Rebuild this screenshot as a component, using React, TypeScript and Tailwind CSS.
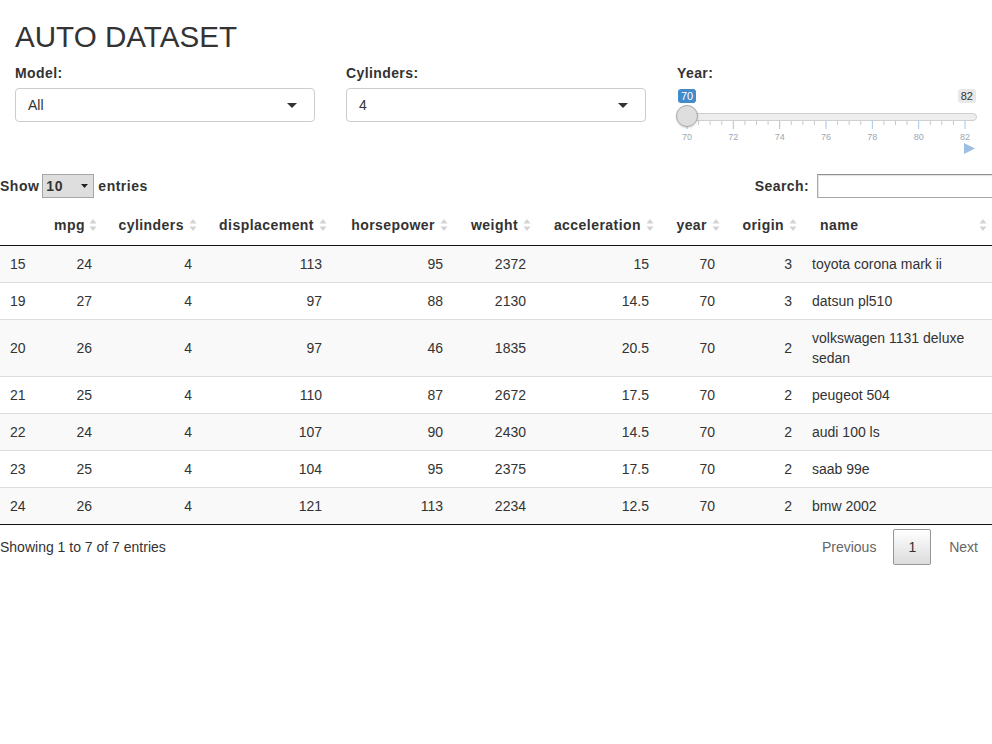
import React from 'react';

type Car = {
  id: number;
  mpg: number;
  cylinders: number;
  displacement: number;
  horsepower: number;
  weight: number;
  acceleration: number;
  year: number;
  origin: number;
  name: string;
};

const cars: Car[] = [
  { id: 15, mpg: 24, cylinders: 4, displacement: 113, horsepower: 95, weight: 2372, acceleration: 15, year: 70, origin: 3, name: 'toyota corona mark ii' },
  { id: 19, mpg: 27, cylinders: 4, displacement: 97, horsepower: 88, weight: 2130, acceleration: 14.5, year: 70, origin: 3, name: 'datsun pl510' },
  { id: 20, mpg: 26, cylinders: 4, displacement: 97, horsepower: 46, weight: 1835, acceleration: 20.5, year: 70, origin: 2, name: 'volkswagen 1131 deluxe sedan' },
  { id: 21, mpg: 25, cylinders: 4, displacement: 110, horsepower: 87, weight: 2672, acceleration: 17.5, year: 70, origin: 2, name: 'peugeot 504' },
  { id: 22, mpg: 24, cylinders: 4, displacement: 107, horsepower: 90, weight: 2430, acceleration: 14.5, year: 70, origin: 2, name: 'audi 100 ls' },
  { id: 23, mpg: 25, cylinders: 4, displacement: 104, horsepower: 95, weight: 2375, acceleration: 17.5, year: 70, origin: 2, name: 'saab 99e' },
  { id: 24, mpg: 26, cylinders: 4, displacement: 121, horsepower: 113, weight: 2234, acceleration: 12.5, year: 70, origin: 2, name: 'bmw 2002' },
];

const numCols: { key: keyof Car; label: string }[] = [
  { key: 'mpg', label: 'mpg' },
  { key: 'cylinders', label: 'cylinders' },
  { key: 'displacement', label: 'displacement' },
  { key: 'horsepower', label: 'horsepower' },
  { key: 'weight', label: 'weight' },
  { key: 'acceleration', label: 'acceleration' },
  { key: 'year', label: 'year' },
  { key: 'origin', label: 'origin' },
];

const colWidths = [44, 58, 100, 130, 121, 83, 123, 66, 77, 190];

function SortIcon() {
  return (
    <svg className="absolute right-[5px] top-1/2 -translate-y-1/2" width="8" height="14" viewBox="0 0 8 14">
      <path d="M0.5 5.5 L4 1 L7.5 5.5 Z" fill="#d3d3d3" />
      <path d="M0.5 8.5 L4 13 L7.5 8.5 Z" fill="#d3d3d3" />
    </svg>
  );
}

function Caret({ className }: { className?: string }) {
  return (
    <svg className={className} width="10" height="5" viewBox="0 0 10 5">
      <path d="M0 0 L10 0 L5 5 Z" fill="#333" />
    </svg>
  );
}

function SelectBox({ value }: { value: string }) {
  return (
    <div className="flex h-[34px] items-center justify-between rounded-[4px] border border-[#ccc] bg-white pl-[12px] pr-[17px] text-[14px]">
      <span>{value}</span>
      <Caret />
    </div>
  );
}

function YearSlider() {
  const start = 10;
  const end = 288;
  const ticks: { x: number; major: boolean }[] = [];
  for (let i = 0; i <= 24; i++) {
    ticks.push({ x: start + ((end - start) * i) / 24, major: i % 4 === 0 });
  }
  const labels = [70, 72, 74, 76, 78, 80, 82];

  return (
    <div className="relative h-[70px] w-full">
      <span className="absolute left-[1px] top-[1px] rounded-[3px] bg-[#428bca] px-[3px] text-[11px] leading-[14px] text-white">70</span>
      <span className="absolute right-[1px] top-[1px] rounded-[3px] bg-[#e8e8e8] px-[3px] text-[11px] leading-[14px] text-[#333]">82</span>
      <div className="absolute left-0 right-0 top-[25px] h-[8px] rounded-full border border-[#cfcfcf] bg-[#ededed]" />
      <svg className="absolute left-0 top-[33px]" width="300" height="10" viewBox="0 0 300 10">
        {ticks.map((t, i) => (
          <line
            key={i}
            x1={t.x}
            x2={t.x}
            y1={0}
            y2={t.major ? 8 : 4}
            stroke={t.major ? '#a3c4e3' : '#c8c8c8'}
            strokeWidth="1"
          />
        ))}
      </svg>
      {labels.map((l, i) => (
        <span
          key={l}
          className="absolute top-[44px] -translate-x-1/2 text-[9px] leading-[11px] text-[#9aa8b6]"
          style={{ left: start + ((end - start) * i) / 6 }}
        >
          {l}
        </span>
      ))}
      <div className="absolute left-[-1px] top-[17px] h-[22px] w-[22px] rounded-full border border-[#aaa] bg-[#dedede] shadow-[0_1px_2px_rgba(0,0,0,0.15)]" />
      <svg className="absolute left-[287px] top-[55px]" width="11" height="11" viewBox="0 0 11 11">
        <path d="M0 0 L11 5.5 L0 11 Z" fill="#9dc0e2" />
      </svg>
    </div>
  );
}

export default function App() {
  return (
    <div className="min-h-screen w-full overflow-hidden bg-white text-[14px] leading-5 text-[#333] font-['Liberation_Sans',Arial,sans-serif]">
      <div className="px-[15px]">
        <h2 className="mb-[10px] mt-[20px] text-[29.6px] leading-[33px]">AUTO DATASET</h2>
        <div className="grid grid-cols-3 gap-x-[31px]">
          <div>
            <label className="mb-[5px] block font-bold tracking-[0.4px]">Model:</label>
            <SelectBox value="All" />
          </div>
          <div>
            <label className="mb-[5px] block font-bold tracking-[0.4px]">Cylinders:</label>
            <SelectBox value="4" />
          </div>
          <div>
            <label className="mb-[5px] block font-bold tracking-[0.4px]">Year:</label>
            <YearSlider />
          </div>
        </div>
      </div>

      {/* Data table */}
      <div className="mt-[16px]">
        <div className="flex h-[24px] items-center justify-between">
          <div className="flex items-center font-bold tracking-[0.5px]">
            <span>Show</span>
            <div className="ml-[3px] mr-[4px] flex h-[24px] w-[52px] items-center justify-between border border-[#a6a6a6] bg-[#dedede] pl-[3px] pr-[5px]">
              <span>10</span>
              <svg width="7" height="4" viewBox="0 0 7 4">
                <path d="M0 0 L7 0 L3.5 4 Z" fill="#222" />
              </svg>
            </div>
            <span>entries</span>
          </div>
          <div className="mr-[-12px] flex items-center font-bold tracking-[0.4px]">
            <span>Search:</span>
            <div className="ml-[8px] h-[24px] w-[187px] border border-[#a9a9a9] border-t-[#8f8f8f] shadow-[inset_1px_1px_1px_rgba(0,0,0,0.12)]" />
          </div>
        </div>

        <table className="mt-[7px] w-full table-fixed border-collapse">
          <colgroup>
            {colWidths.map((w, i) => (
              <col key={i} style={{ width: w }} />
            ))}
          </colgroup>
          <thead>
            <tr className="border-b border-[#111]">
              <th className="py-[10px]" />
              {numCols.map((c) => (
                <th key={c.key} className="relative py-[10px] pl-[10px] pr-[18px] text-right font-bold tracking-[0.45px]">
                  {c.label}
                  <SortIcon />
                </th>
              ))}
              <th className="relative py-[10px] pl-[18px] pr-[18px] text-left font-bold tracking-[0.45px]">
                name
                <SortIcon />
              </th>
            </tr>
          </thead>
          <tbody>
            {cars.map((car, idx) => (
              <tr
                key={car.id}
                className={`${idx % 2 === 0 ? 'bg-[#f9f9f9]' : 'bg-white'} ${idx > 0 ? 'border-t border-[#ddd]' : ''}`}
              >
                <td className="px-[10px] py-[8px] align-middle">{car.id}</td>
                {numCols.map((c) => (
                  <td key={c.key} className="px-[10px] py-[8px] text-right align-middle">
                    {car[c.key]}
                  </td>
                ))}
                <td className="px-[10px] py-[8px] align-middle">{car.name}</td>
              </tr>
            ))}
          </tbody>
        </table>
        <div className="border-t border-[#111]" />

        <div className="mt-[4px] flex items-center justify-between">
          <div>Showing 1 to 7 of 7 entries</div>
          <div className="flex items-center">
            <span className="border border-transparent px-[14px] py-[7px] text-[#666]">Previous</span>
            <span className="ml-[2px] rounded-[2px] border border-[#979797] bg-gradient-to-b from-white to-[#dcdcdc] px-[14px] py-[7px] text-[#333]">
              1
            </span>
            <span className="ml-[2px] border border-transparent pl-[15px] pr-[13px] py-[7px] text-[#666]">Next</span>
          </div>
        </div>
      </div>
    </div>
  );
}
